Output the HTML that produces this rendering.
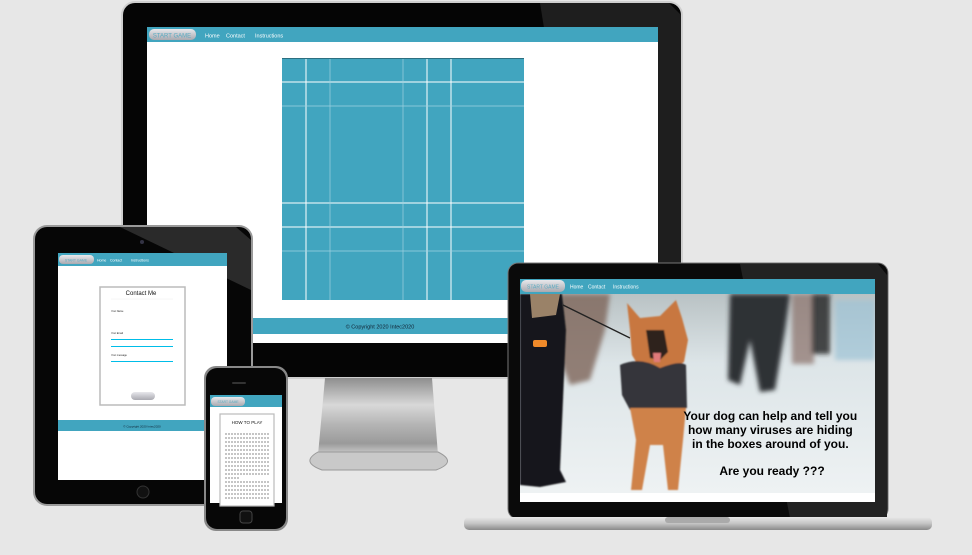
<!DOCTYPE html>
<html><head><meta charset="utf-8"><style>
html,body{margin:0;padding:0;background:#e7e7e7;width:972px;height:555px;overflow:hidden}
svg{display:block}
text{font-family:"Liberation Sans",sans-serif}
</style></head><body>
<svg width="972" height="555" viewBox="0 0 972 555" xmlns="http://www.w3.org/2000/svg">
<defs>
<linearGradient id="stand" x1="0" y1="0" x2="0" y2="1">
<stop offset="0" stop-color="#8e8e8e"/><stop offset="0.35" stop-color="#d8d8d8"/><stop offset="0.6" stop-color="#b5b5b5"/><stop offset="0.85" stop-color="#9a9a9a"/><stop offset="1" stop-color="#d0d0d0"/>
</linearGradient>
<linearGradient id="btn" x1="0" y1="0" x2="0" y2="1"><stop offset="0" stop-color="#e8e8ec"/><stop offset="1" stop-color="#a9a9b0"/></linearGradient>
<linearGradient id="snow" x1="0" y1="0" x2="0" y2="1"><stop offset="0" stop-color="#b9c2c4"/><stop offset="0.35" stop-color="#dde5e8"/><stop offset="1" stop-color="#eef2f3"/></linearGradient>
<linearGradient id="base" x1="0" y1="0" x2="0" y2="1"><stop offset="0" stop-color="#e9e9e9"/><stop offset="0.5" stop-color="#c4c4c4"/><stop offset="1" stop-color="#8a8a8a"/></linearGradient>
<filter id="bl" x="-10%" y="-10%" width="120%" height="120%"><feGaussianBlur stdDeviation="2.5"/></filter>
<filter id="bl2"><feGaussianBlur stdDeviation="0.8"/></filter>
<clipPath id="ph"><rect x="520" y="294" width="355" height="199"/></clipPath>
</defs>

<!-- Monitor -->
<rect x="121" y="1" width="562" height="378" rx="14" fill="#cfcfcf"/>
<rect x="123" y="3" width="558" height="374" rx="12" fill="#050505"/>
<polygon points="540,3 669,3 681,15 681,377 600,377" fill="#1e1e1e"/>
<rect x="147" y="27" width="511" height="316" fill="#fff"/>
<rect x="147" y="27" width="511" height="15" fill="#41a5bf"/>
<rect x="149" y="29" width="47" height="11" rx="5" fill="url(#btn)"/>
<text x="172" y="37.5" font-size="6" fill="#5aaac0" text-anchor="middle">START GAME</text>
<text x="205" y="37.5" font-size="5.5" fill="#fff">Home</text>
<text x="226" y="37.5" font-size="5.5" fill="#fff">Contact</text>
<text x="255" y="37.5" font-size="5.5" fill="#fff">Instructions</text>
<rect x="282" y="58" width="242" height="242" fill="#41a5bf"/>
<g stroke="#ffffff" stroke-width="1">
<line x1="306" y1="58" x2="306" y2="300"/><line x1="427" y1="58" x2="427" y2="300"/><line x1="451" y1="58" x2="451" y2="300"/>
<line x1="282" y1="82" x2="524" y2="82"/><line x1="282" y1="203" x2="524" y2="203"/><line x1="282" y1="227" x2="524" y2="227"/>
</g>
<g stroke="#9fd2e0" stroke-width="0.7">
<line x1="330" y1="58" x2="330" y2="300"/><line x1="403" y1="58" x2="403" y2="300"/>
<line x1="282" y1="106" x2="524" y2="106"/><line x1="282" y1="251" x2="524" y2="251"/>
</g>
<rect x="282" y="58" width="242" height="1" fill="#2c6f80"/>
<rect x="147" y="318" width="511" height="16" fill="#41a5bf"/>
<text x="380" y="328.5" font-size="5.5" fill="#123" text-anchor="middle">© Copyright 2020 Intec2020</text>
<!-- stand -->
<polygon points="325,378 432,378 438,455 318,455" fill="url(#stand)"/>
<path d="M318,452 Q300,462 322,470 L436,470 Q458,462 438,452 Z" fill="#c9c9c9" stroke="#999" stroke-width="1"/>

<!-- Laptop -->
<rect x="508" y="263" width="380" height="256" rx="10" fill="#0a0a0a" stroke="#777" stroke-width="1"/>
<polygon points="740,264 878,264 887,275 887,518 790,518" fill="#222"/>
<rect x="520" y="279" width="355" height="223" fill="#fff"/>
<rect x="520" y="279" width="355" height="15" fill="#41a5bf"/>
<rect x="521" y="280" width="44" height="12" rx="5" fill="url(#btn)"/>
<text x="543" y="288.5" font-size="5" fill="#5aaac0" text-anchor="middle">START GAME</text>
<text x="570" y="288.5" font-size="5" fill="#fff">Home</text>
<text x="588" y="288.5" font-size="5" fill="#fff">Contact</text>
<text x="613" y="288.5" font-size="5" fill="#fff">Instructions</text>
<!-- photo -->
<rect x="520" y="294" width="355" height="199" fill="url(#snow)"/>
<g clip-path="url(#ph)">
<g filter="url(#bl)">
<path d="M560,294 L610,294 L605,330 L590,380 L570,385 L560,360 Z" fill="#7d6458" opacity="0.8"/>
<path d="M730,294 L790,294 L785,330 L775,390 L760,392 L750,340 L740,385 L728,380 Z" fill="#2e3036"/>
<rect x="792" y="294" width="22" height="70" fill="#8a7068" opacity="0.7"/>
<rect x="812" y="294" width="18" height="60" fill="#1e1e22" opacity="0.8"/>
<rect x="835" y="300" width="40" height="60" fill="#9ec3d6" opacity="0.7"/>
</g>
<path d="M520,294 L562,294 L566,330 L560,470 L566,482 L540,487 L520,485 Z" fill="#15171a" filter="url(#bl2)"/>
<path d="M530,294 L560,294 L556,315 L532,318 Z" fill="#9a8268"/>
<rect x="533" y="340" width="14" height="7" rx="2" fill="#f08a2a"/>
<line x1="563" y1="305" x2="630" y2="338" stroke="#222" stroke-width="1.3"/>
<g filter="url(#bl2)">
<path d="M627,303 L640,318 L660,316 L676,300 L682,318 L688,340 L684,362 L668,372 L642,372 L632,355 L630,330 Z" fill="#c8773f"/>
<path d="M646,330 L664,330 L668,352 L660,360 L650,358 Z" fill="#2e221c"/>
<path d="M653,353 L661,353 L660,362 L654,362 Z" fill="#e07a7a"/>
<path d="M620,365 Q640,356 660,368 Q680,360 686,365 L687,408 L630,410 L622,395 Z" fill="#35363a"/>
<path d="M630,408 L686,408 L683,440 L678,490 L668,490 L663,445 L650,445 L642,490 L631,490 L636,440 Z" fill="#cf8249"/>
</g>
</g>
<text font-size="12" font-weight="bold" fill="#000" text-anchor="middle">
<tspan x="772" y="420">Your dog can help and tell you</tspan>
<tspan x="772" y="434">how many viruses are hiding</tspan>
<tspan x="772" y="448">in the boxes around of you.</tspan>
<tspan x="772" y="475">Are you ready ???</tspan>
</text>
<!-- base -->
<rect x="464" y="517" width="468" height="13" rx="5" fill="url(#base)"/>
<rect x="665" y="517" width="65" height="6" rx="3" fill="#aaa"/>

<!-- Tablet -->
<rect x="33" y="225" width="220" height="281" rx="14" fill="#9a9a9a"/>
<rect x="35" y="227" width="216" height="277" rx="12" fill="#060606"/>
<polygon points="120,227 236,227 251,240 251,290" fill="#2a2a2a"/>
<circle cx="142" cy="242" r="2" fill="#334"/>
<rect x="58" y="253" width="169" height="227" fill="#fff"/>
<rect x="58" y="253" width="169" height="13" fill="#41a5bf"/>
<rect x="59" y="255" width="35" height="9" rx="4" fill="url(#btn)"/>
<text x="76" y="261.5" font-size="3.5" fill="#5aaac0" text-anchor="middle">START GAME</text>
<text x="97" y="261.5" font-size="3.5" fill="#fff">Home</text>
<text x="110" y="261.5" font-size="3.5" fill="#fff">Contact</text>
<text x="131" y="261.5" font-size="3.5" fill="#fff">Instructions</text>
<rect x="100" y="287" width="85" height="118" fill="#fff" stroke="#bbb" stroke-width="1.5"/>
<text x="141" y="295" font-size="6" fill="#111" text-anchor="middle">Contact Me</text>
<line x1="111" y1="299" x2="173" y2="299" stroke="#eee" stroke-width="0.5"/>
<text x="111" y="312" font-size="2.5" fill="#222">Your Name</text>
<text x="111" y="334" font-size="2.5" fill="#222">Your Email</text>
<rect x="111" y="339" width="62" height="1" fill="#00bde8"/>
<rect x="111" y="346" width="62" height="1" fill="#00bde8"/>
<text x="111" y="356" font-size="2.5" fill="#222">Your message</text>
<rect x="111" y="361" width="62" height="1" fill="#00bde8"/>
<rect x="131" y="392" width="24" height="8" rx="4" fill="url(#btn)"/>
<rect x="58" y="420" width="169" height="11" fill="#41a5bf"/>
<text x="142" y="427.5" font-size="3" fill="#123" text-anchor="middle">© Copyright 2020 Intec2020</text>
<circle cx="143" cy="492" r="6" fill="#111" stroke="#333"/>

<!-- Phone -->
<rect x="204" y="366" width="84" height="165" rx="12" fill="#888"/>
<rect x="206" y="368" width="80" height="161" rx="11" fill="#070707"/>
<rect x="232" y="382" width="14" height="2" rx="1" fill="#333"/>
<rect x="210" y="395" width="72" height="108" fill="#fff"/>
<rect x="210" y="395" width="72" height="12" fill="#41a5bf"/>
<rect x="211" y="397" width="34" height="9" rx="4" fill="url(#btn)"/>
<text x="228" y="403" font-size="3.3" fill="#5aaac0" text-anchor="middle">START GAME</text>
<rect x="220" y="414" width="54" height="92" fill="#fff" stroke="#bbb" stroke-width="1.2"/>
<text x="247" y="424" font-size="4.5" fill="#111" text-anchor="middle">HOW TO PLAY</text>
<g stroke="#666" stroke-width="0.8" stroke-dasharray="2,1">
<line x1="225" y1="434" x2="269" y2="434"/><line x1="225" y1="438" x2="269" y2="438"/><line x1="225" y1="442" x2="269" y2="442"/><line x1="225" y1="446" x2="269" y2="446"/><line x1="225" y1="450" x2="269" y2="450"/><line x1="225" y1="454" x2="269" y2="454"/><line x1="225" y1="458" x2="269" y2="458"/><line x1="225" y1="462" x2="269" y2="462"/><line x1="225" y1="466" x2="269" y2="466"/><line x1="225" y1="470" x2="269" y2="470"/><line x1="225" y1="474" x2="269" y2="474"/><line x1="225" y1="478" x2="240" y2="478"/><line x1="225" y1="482" x2="269" y2="482"/><line x1="225" y1="486" x2="269" y2="486"/><line x1="225" y1="490" x2="269" y2="490"/><line x1="225" y1="494" x2="269" y2="494"/><line x1="225" y1="498" x2="269" y2="498"/>
</g>
<rect x="240" y="511" width="12" height="12" rx="3" fill="#111" stroke="#444"/>
</svg>
</body></html>
